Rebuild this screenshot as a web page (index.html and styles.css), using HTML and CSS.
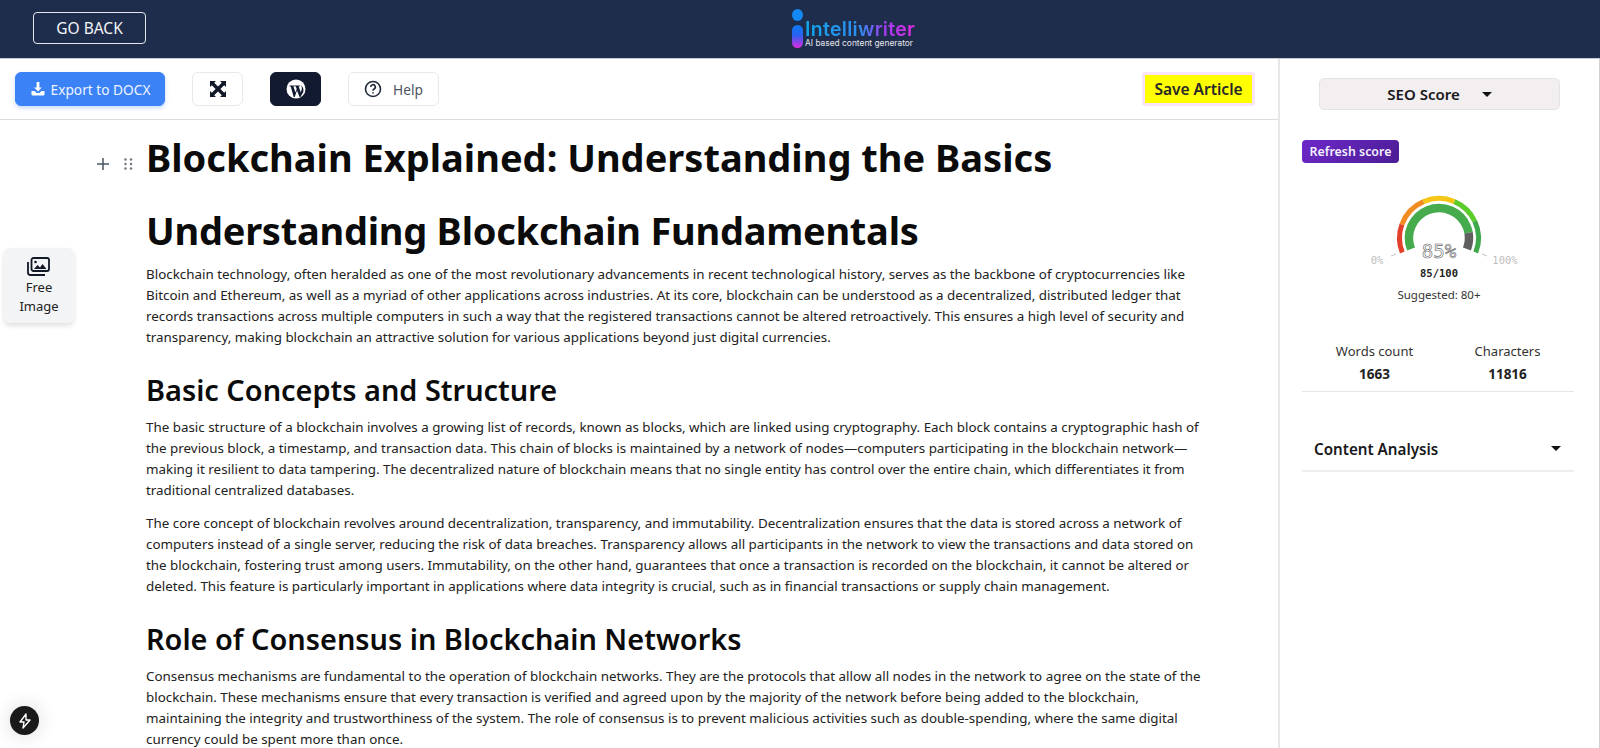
FILE: index.html
```html
<!DOCTYPE html>
<html lang="en">
<head>
  <meta charset="UTF-8" />
  <title>Intelliwriter Editor</title>
  <link rel="stylesheet" href="styles.css">
</head>
<body>
  <header class="topbar">
    <button class="back-btn">GO BACK</button>
    <div class="logo">
      <svg class="logo-mark" width="13" height="39" viewBox="0 0 13 39">
        <defs>
          <linearGradient id="logoGrad" x1="0" y1="0" x2="0" y2="1">
            <stop offset="0" stop-color="#0a7df5" />
            <stop offset="0.45" stop-color="#2a60f0" />
            <stop offset="1" stop-color="#e02be0" />
          </linearGradient>
        </defs>
        <ellipse cx="6.500" cy="6" rx="5.500" ry="6" fill="#1488f5" />
        <rect x="1" y="16" width="11" height="23" rx="5.500" fill="url(#logoGrad)" />
      </svg>
      <div class="logo-text">
        <div class="logo-name">Intelliwriter</div>
        <div class="logo-sub">AI based content generator</div>
      </div>
    </div>
  </header>

  <div class="main">
    <div class="workspace">
      <div class="toolbar">
        <button class="btn btn-blue">
          <svg width="16" height="16" viewBox="0 0 16 16" fill="#fff"><path d="M6.600 1h2.800v5.500h2.400L8 10.600 4.200 6.500h2.400z" /><path d="M1.500 10h3l2 2h3l2-2h3v3.500a1 1 0 0 1-1 1h-11a1 1 0 0 1-1-1z" /></svg>
          Export to DOCX
        </button>
        <button class="btn btn-icon">
          <svg width="18" height="18" viewBox="0 0 18 18" fill="#111827"><path d="M1 1h6L5.200 2.800 9 6.600l3.800-3.800L11 1h6v6l-1.800-1.800L11.400 9l3.800 3.800L17 11v6h-6l1.800-1.800L9 11.400l-3.800 3.800L7 17H1v-6l1.800 1.800L6.600 9 2.800 5.200 1 7z" /></svg>
        </button>
        <button class="btn btn-icon btn-dark">
          <svg width="20" height="20" viewBox="0 0 20 20"><circle cx="10" cy="10" r="9.500" fill="#fff" /><path d="M3.500 6.500h5.200v.7l-1.300.2 2.100 6 1.200-3.500-.9-2.500-.9-.2v-.7h5v.7l-1.200.2 2.100 6 1-3.300c.4-1.500-.2-2.300-.9-3.500 1.600.6 3.300 3.500 2.300 6.700L14.400 18h-.9l-2.500-6.600L8.700 18h-1L4.700 7.400l-1.200-.2z" fill="#111a2e" /></svg>
        </button>
        <button class="btn btn-help">
          <svg width="18" height="18" viewBox="0 0 18 18" fill="none" stroke="#1f2937" stroke-width="1.600"><circle cx="9" cy="9" r="7.500" /><path d="M6.700 7a2.300 2.300 0 1 1 3.400 2c-.8.500-1.100.9-1.100 1.700" /><path d="M9 12.300v1.200" /></svg>
          Help
        </button>
        <button class="btn-save">Save Article</button>
      </div>

      <div class="editor">
        <div class="block-tools">
          <svg width="12" height="12" viewBox="0 0 12 12" stroke="#4b5563" stroke-width="1.500"><path d="M6 0v12M0 6h12" /></svg>
          <svg width="9" height="12" viewBox="0 0 9 12" fill="#6b7280"><circle cx="1.500" cy="1.500" r="1.200" /><circle cx="7" cy="1.500" r="1.200" /><circle cx="1.500" cy="6" r="1.200" /><circle cx="7" cy="6" r="1.200" /><circle cx="1.500" cy="10.500" r="1.200" /><circle cx="7" cy="10.500" r="1.200" /></svg>
        </div>
        <h1>Blockchain Explained: Understanding the Basics</h1>
        <h1 class="second">Understanding Blockchain Fundamentals</h1>
        <p>Blockchain technology, often heralded as one of the most revolutionary advancements in recent technological history, serves as the backbone of cryptocurrencies like Bitcoin and Ethereum, as well as a myriad of other applications across industries. At its core, blockchain can be understood as a decentralized, distributed ledger that records transactions across multiple computers in such a way that the registered transactions cannot be altered retroactively. This ensures a high level of security and transparency, making blockchain an attractive solution for various applications beyond just digital currencies.</p>
        <h2>Basic Concepts and Structure</h2>
        <p>The basic structure of a blockchain involves a growing list of records, known as blocks, which are linked using cryptography. Each block contains a cryptographic hash of the previous block, a timestamp, and transaction data. This chain of blocks is maintained by a network of nodes—computers participating in the blockchain network—making it resilient to data tampering. The decentralized nature of blockchain means that no single entity has control over the entire chain, which differentiates it from traditional centralized databases.</p>
        <p>The core concept of blockchain revolves around decentralization, transparency, and immutability. Decentralization ensures that the data is stored across a network of computers instead of a single server, reducing the risk of data breaches. Transparency allows all participants in the network to view the transactions and data stored on the blockchain, fostering trust among users. Immutability, on the other hand, guarantees that once a transaction is recorded on the blockchain, it cannot be altered or deleted. This feature is particularly important in applications where data integrity is crucial, such as in financial transactions or supply chain management.</p>
        <h2>Role of Consensus in Blockchain Networks</h2>
        <p>Consensus mechanisms are fundamental to the operation of blockchain networks. They are the protocols that allow all nodes in the network to agree on the state of the blockchain. These mechanisms ensure that every transaction is verified and agreed upon by the majority of the network before being added to the blockchain, maintaining the integrity and trustworthiness of the system. The role of consensus is to prevent malicious activities such as double-spending, where the same digital currency could be spent more than once.</p>
      </div>

      <div class="free-image">
        <svg width="24" height="20" viewBox="0 0 24 20" fill="none" stroke="#111827" stroke-width="1.800"><rect x="5.500" y="1" width="17.500" height="13" rx="2" /><path d="M2 5v10.500A2.500 2.500 0 0 0 4.500 18H19" /><path d="M8 12l3.500-4 2.500 2.500 2.500-3.500 4 5z" fill="#111827" stroke="none" /><circle cx="9.500" cy="5" r="1.300" fill="#111827" stroke="none" /></svg>
        <span>Free Image</span>
      </div>

      <div class="dev-badge">
        <svg width="14" height="16" viewBox="0 0 14 16" fill="none" stroke="#fff" stroke-width="1.400" stroke-linejoin="round"><path d="M8 1L2 9h4l-1 6 7-8H8z" /></svg>
      </div>
    </div>

    <aside class="sidebar">
      <div class="seo-select">SEO Score <span class="caret"></span></div>
      <button class="refresh">Refresh score</button>

      <div class="gauge">
        <svg width="180" height="110" viewBox="0 0 180 110" fill="none">
          <g stroke-width="5">
            <circle cx="90" cy="48" r="39.500" pathLength="360" stroke="#e2402b" stroke-dasharray="41.500 360" transform="rotate(158.500 90 48)" />
            <circle cx="90" cy="48" r="39.500" pathLength="360" stroke="#f08c22" stroke-dasharray="47 360" transform="rotate(200 90 48)" />
            <circle cx="90" cy="48" r="39.500" pathLength="360" stroke="#f5c518" stroke-dasharray="46 360" transform="rotate(247 90 48)" />
            <circle cx="90" cy="48" r="39.500" pathLength="360" stroke="#5ccb2c" stroke-dasharray="42 360" transform="rotate(293 90 48)" />
            <circle cx="90" cy="48" r="39.500" pathLength="360" stroke="#3ea84a" stroke-dasharray="46.500 360" transform="rotate(335 90 48)" />
          </g>
          <g stroke-width="8.500">
            <circle cx="90" cy="48" r="30" pathLength="360" stroke="#45ab4d" stroke-dasharray="191.500 360" transform="rotate(158.500 90 48)" />
            <circle cx="90" cy="48" r="30" pathLength="360" stroke="#5f5f5f" stroke-dasharray="31.500 360" transform="rotate(350 90 48)" />
          </g>
          <path d="M42 66l5-2M133 64l5 2" stroke="#c4c4c4" />
          <text x="28" y="74" class="gauge-tick" text-anchor="middle">0%</text>
          <text x="156" y="74" class="gauge-tick" text-anchor="middle">100%</text>
          <text x="90" y="68" class="gauge-pct" text-anchor="middle">85%</text>
          <text x="90" y="87" class="gauge-val" text-anchor="middle">85/100</text>
        </svg>
        <div class="suggested">Suggested: 80+</div>
      </div>

      <div class="counts">
        <div class="count"><span>Words count</span><strong>1663</strong></div>
        <div class="count"><span>Characters</span><strong>11816</strong></div>
      </div>

      <div class="analysis">Content Analysis <span class="caret"></span></div>
    </aside>
  </div>
</body>
</html>
```

FILE: styles.css
```css
* {
  box-sizing: border-box;
}
html, body {
  margin: 0;
  height: 748px;
  overflow: hidden;
}
body {
  font-family: "Noto Sans", Arial, sans-serif;
  color: #1f2937;
  background-color: #fff;
}
button {
  font-family: inherit;
  cursor: pointer;
}

/* Top navy bar */
.topbar {
  height: 59px;
  background-color: #1f2d4d;
  position: relative;
  display: flex;
  align-items: flex-start;
  padding: 9px 0 0 791px;
  border-bottom: 1px solid #c9ced6;
}
.back-btn {
  position: absolute;
  left: 33px;
  top: 12px;
  width: 113px;
  height: 32px;
  background: none;
  border: 1px solid #e5e7eb;
  border-radius: 4px;
  color: #f3f4f6;
  font-size: 15.500px;
}
.logo {
  display: flex;
  align-items: flex-end;
  gap: 1px;
}
.logo-name {
  font-family: Inter, sans-serif;
  font-weight: 600;
  font-size: 19.500px;
  line-height: 20px;
  letter-spacing: 0.3px;
  background: linear-gradient(90deg, #10a5e8 0%, #2f8cf0 50%, #a03cf0 72%, #e02be0 100%);
  -webkit-background-clip: text;
  background-clip: text;
  color: transparent;
}
.logo-sub {
  font-family: Inter, sans-serif;
  font-size: 8.400px;
  line-height: 9px;
  color: #e5e7eb;
}

.main {
  display: flex;
  height: 689px;
}
.workspace {
  width: 1278px;
  position: relative;
  overflow: hidden;
}

/* Toolbar */
.toolbar {
  height: 61px;
  display: flex;
  align-items: center;
  padding: 0 23px 0 15px;
  border-bottom: 1px solid #dcdcdc;
}
.btn {
  height: 34px;
  border-radius: 6px;
  border: 1px solid #e9e9ec;
  background-color: #fff;
  display: flex;
  align-items: center;
  justify-content: center;
  font-size: 13.700px;
}
.btn-blue {
  width: 150px;
  gap: 5px;
  background-color: #3b82f6;
  border-color: #3b82f6;
  color: #eef4ff;
  box-shadow: 0 2px 4px rgba(59, 130, 246, 0.3);
}
.btn-icon {
  width: 51px;
  margin-left: 27px;
}
.btn-dark {
  background-color: #111a2e;
  border-color: #111a2e;
}
.btn-help {
  width: 91px;
  margin-left: 27px;
  gap: 11px;
  color: #4b5563;
}
.btn-save {
  margin-left: auto;
  width: 113px;
  height: 34px;
  background-color: #ffff00;
  border: 3px solid #f8e6f8;
  border-radius: 3px;
  color: #27272a;
  font-weight: 600;
  font-size: 15.500px;
  padding: 0;
}

/* Article */
.editor {
  position: relative;
  padding: 0 77px 0 146px;
  color: #111;
}
.block-tools {
  position: absolute;
  left: 97px;
  top: 38px;
  display: flex;
  align-items: center;
  gap: 15px;
}
h1 {
  margin: 0;
  padding-top: 12px;
  font-size: 38px;
  line-height: 50px;
  font-weight: 700;
  color: #0b0b0b;
}
h1.second {
  padding-top: 23px;
  margin-bottom: 9px;
  letter-spacing: -0.25px;
}
h2 {
  margin: 21.500px 0 7.500px;
  font-size: 28.900px;
  line-height: 40px;
  font-weight: 600;
  color: #0b0b0b;
}
p {
  margin: 0 0 12px;
  font-size: 13.380px;
  line-height: 21px;
  color: #222;
}

/* Floating things */
.free-image {
  position: absolute;
  left: 4px;
  top: 189px;
  width: 70px;
  height: 75px;
  background-color: #f3f4f6;
  border-radius: 6px;
  box-shadow: 0 3px 5px rgba(0, 0, 0, 0.12);
  display: flex;
  flex-direction: column;
  align-items: center;
  padding-top: 9px;
  font-size: 13px;
  line-height: 19px;
  text-align: center;
  color: #222;
}
.free-image svg {
  margin: 0 3px 1px 0;
}
.free-image span {
  width: 50px;
}
.dev-badge {
  position: absolute;
  left: 10px;
  top: 647px;
  width: 29px;
  height: 29px;
  border-radius: 50%;
  background-color: #1a1a1a;
  display: flex;
  align-items: center;
  justify-content: center;
  box-shadow: 0 0 20px rgba(0, 0, 0, 0.15);
}

/* Right panel */
.sidebar {
  width: 322px;
  border-left: 2px solid #e5e7eb;
  border-right: 1px solid #d0d0d0;
  padding: 19px 25px 0 22px;
}
.seo-select {
  width: 241px;
  height: 32px;
  margin-left: 17px;
  background-color: #f3eff1;
  border: 1px solid #e4e4e7;
  border-radius: 5px;
  display: flex;
  align-items: center;
  justify-content: center;
  gap: 22px;
  font-size: 15px;
  font-weight: 600;
  color: #18181b;
}
.caret {
  display: inline-block;
  width: 0;
  height: 0;
  border-left: 5px solid transparent;
  border-right: 5px solid transparent;
  border-top: 5.500px solid #111;
}
.refresh {
  display: block;
  margin-top: 30px;
  width: 97px;
  height: 23px;
  background: linear-gradient(135deg, #6d28c9, #4c1d95);
  border: none;
  border-radius: 4px;
  color: #f5f0ff;
  font-size: 12.400px;
  font-weight: 600;
  padding: 0;
}
.gauge {
  margin-top: 27px;
  display: flex;
  flex-direction: column;
  align-items: center;
  margin-left: 2px;
}
.gauge svg {
  display: block;
}
.gauge-tick {
  font-family: "DejaVu Sans Mono", monospace;
  font-size: 10.500px;
  fill: #bdbdbd;
}
.gauge-pct {
  font-family: "DejaVu Sans Mono", monospace;
  font-size: 19px;
  fill: #fff;
  stroke: #666;
  stroke-width: 0.600px;
}
.gauge-val {
  font-family: "DejaVu Sans Mono", monospace;
  font-size: 10.500px;
  font-weight: 700;
  fill: #222;
}
.suggested {
  margin-top: -13px;
  font-size: 11.500px;
  line-height: 16px;
  color: #333;
}
.counts {
  margin-top: 38px;
  display: grid;
  grid-template-columns: 1fr 1fr;
  padding: 0 0 6px 6px;
  border-bottom: 1px solid #e5e7eb;
}
.count {
  display: flex;
  flex-direction: column;
  align-items: center;
  gap: 2px;
  font-size: 13px;
  line-height: 21px;
  color: #333;
}
.count strong {
  font-size: 13.500px;
  font-weight: 700;
  color: #222;
}
.analysis {
  margin-top: 45px;
  height: 35px;
  padding: 0 13px 10px 12px;
  display: flex;
  align-items: center;
  justify-content: space-between;
  font-size: 15.200px;
  font-weight: 600;
  color: #18181b;
  border-bottom: 2px solid #eeeeee;
}
```
